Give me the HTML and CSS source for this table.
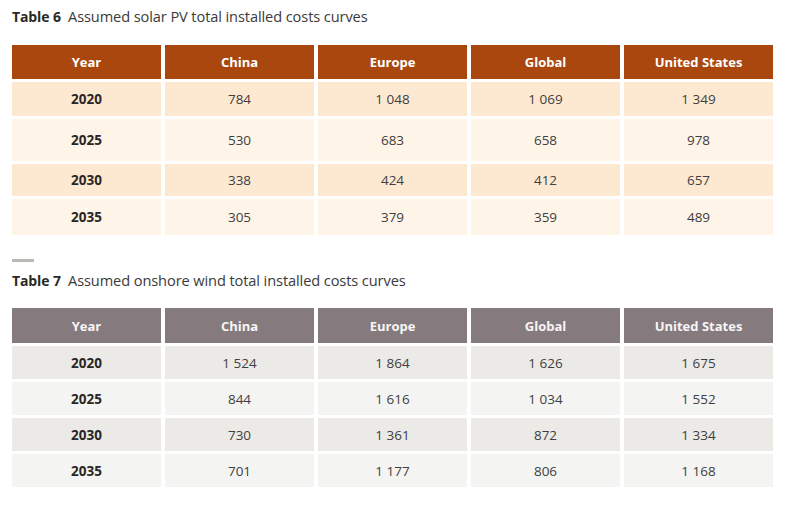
FILE: index.html
```html
<!DOCTYPE html>
<html>
<head>
<meta charset="utf-8">
<link rel="stylesheet" href="styles.css">
</head>
<body>
<div class="page">
  <div class="title t6"><b>Table 6</b>&nbsp; <span>Assumed solar PV total installed costs curves</span></div>
  <div class="table solar">
    <div class="row head"><div>Year</div><div>China</div><div>Europe</div><div>Global</div><div>United States</div></div>
    <div class="row odd r1"><div class="yr">2020</div><div>784</div><div>1 048</div><div>1 069</div><div>1 349</div></div>
    <div class="row even r2"><div class="yr">2025</div><div>530</div><div>683</div><div>658</div><div>978</div></div>
    <div class="row odd r3"><div class="yr">2030</div><div>338</div><div>424</div><div>412</div><div>657</div></div>
    <div class="row even r4"><div class="yr">2035</div><div>305</div><div>379</div><div>359</div><div>489</div></div>
  </div>
  <div class="rule"></div>
  <div class="title t7"><b>Table 7</b>&nbsp; <span>Assumed onshore wind total installed costs curves</span></div>
  <div class="table wind">
    <div class="row head"><div>Year</div><div>China</div><div>Europe</div><div>Global</div><div>United States</div></div>
    <div class="row odd"><div class="yr">2020</div><div>1 524</div><div>1 864</div><div>1 626</div><div>1 675</div></div>
    <div class="row even"><div class="yr">2025</div><div>844</div><div>1 616</div><div>1 034</div><div>1 552</div></div>
    <div class="row odd"><div class="yr">2030</div><div>730</div><div>1 361</div><div>872</div><div>1 334</div></div>
    <div class="row even"><div class="yr">2035</div><div>701</div><div>1 177</div><div>806</div><div>1 168</div></div>
  </div>
</div>
</body>
</html>
```
FILE: styles.css
```css
* { box-sizing: border-box; }
html, body { margin: 0; padding: 0; background: #fff; }
body { font-family: "Open Sans", "Liberation Sans", sans-serif; color: #444; }
.page { padding: 7px 0 0 12px; width: 787px; }
.title { font-size: 14px; color: #3a3a3a; line-height: 20px; height: 20px; letter-spacing: -0.1px; white-space: nowrap; }
.title b { font-weight: 700; color: #2a2a2a; }
.title span { font-size: 14.6px; line-height: 18px; }
.t6 { margin-bottom: 18px; }
.table { display: flex; flex-direction: column; gap: 3px; width: 761px; }
.row { display: grid; grid-template-columns: repeat(5, 1fr); column-gap: 4px; height: 33px; }
.row > div { display: flex; align-items: center; justify-content: center; font-size: 13.5px; color: #3f3f3f; }
.row .yr { font-weight: 700; color: #2b2623; font-size: 13.5px; }
.head { height: 34px; }
.head > div { color: #fff; font-weight: 700; font-size: 13px; }
.solar .head > div { background: #a9470f; }
.solar .odd > div { background: #fde9d2; }
.solar .even > div { background: #fef4e8; }
.solar .r1 { height: 34px; }
.solar .r2 { height: 42px; }
.solar .r3 { height: 32px; }
.solar .r4 { height: 36px; }
.wind .head { height: 35px; }
.wind .head > div { background: #857a7e; color: #f7f5f5; }
.wind .odd > div { background: #ebeae7; }
.wind .even > div { background: #f4f4f2; }
.rule { width: 22px; height: 3px; background: #b9b9b5; margin: 24px 0 9px; }
.t7 { margin-bottom: 17px; }
```
